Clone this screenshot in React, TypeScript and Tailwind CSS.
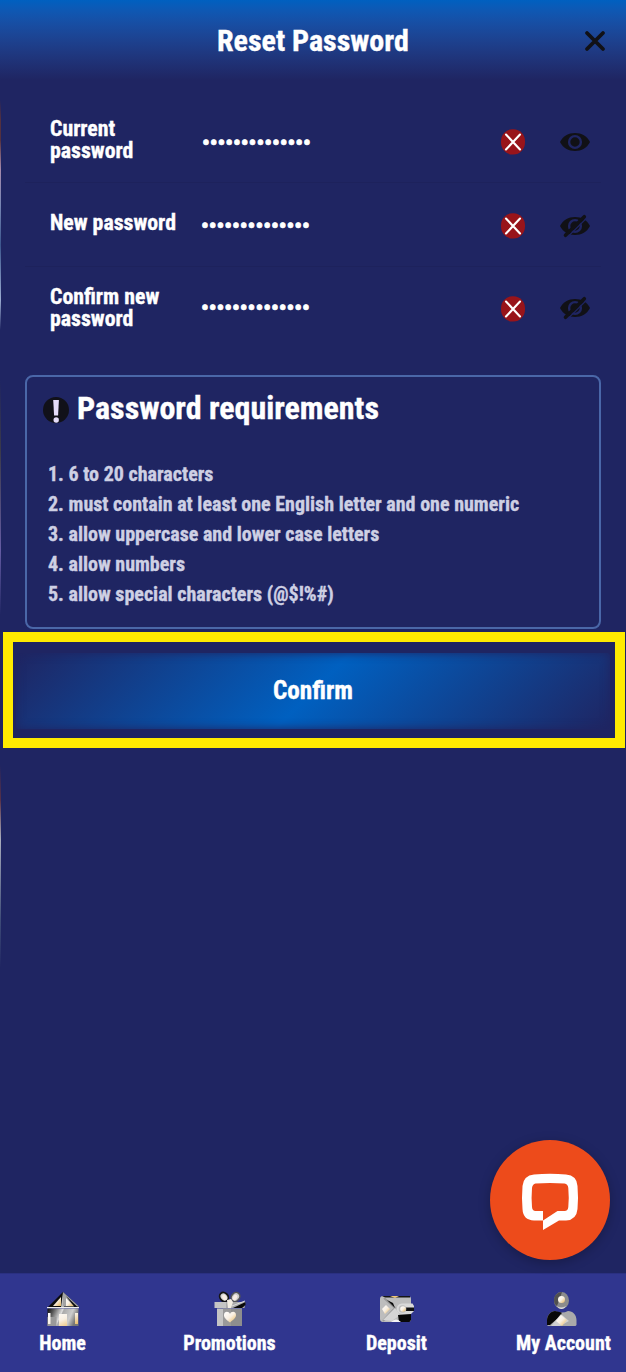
import React from "react";

function ErrorIcon() {
  return (
    <svg width="26" height="28" viewBox="0 0 26 28" className="block shrink-0">
      <rect x="1" y="1.2" width="24" height="25.4" rx="11.5" ry="12" fill="#98141a" />
      <path d="M6 6.5 20 21.5M20 6.5 6 21.5" stroke="#fff" strokeWidth="2.1" strokeLinecap="round" />
    </svg>
  );
}

function Eye({ off = false }: { off?: boolean }) {
  return (
    <svg width="30" height="24" viewBox="0 0 30 24" className="block shrink-0">
      <path d="M0 12C3 6 8.500 3 15 3s12 3 15 9c-3 6-8.500 9-15 9S3 18 0 12Z" fill="#111116" />
      <circle cx="15" cy="12" r="5.900" fill="none" stroke="#1f2562" strokeWidth="2.400" />
      {off && (
        <>
          <path d="M7.500 23 26.500 4.200" stroke="#1f2562" strokeWidth="1.200" />
          <path d="M5.500 21.300 24.300 2.700" stroke="#111116" strokeWidth="3.600" strokeLinecap="round" />
        </>
      )}
    </svg>
  );
}

function Row({ label, labelClass, dotsClass, iconsClass, off }: { label: React.ReactNode; labelClass: string; dotsClass: string; iconsClass: string; off?: boolean }) {
  return (
    <div className="mx-[25px] flex h-[84px] items-center border-b border-[#1d225c] pl-[25px] pr-[11px]">
      <div className={"w-[151px] shrink-0 text-[21.8px] leading-[22px] " + labelClass}>{label}</div>
      <div className={"flex-1 text-[21.6px] leading-[22px] [-webkit-text-stroke:0.7px_white] " + dotsClass}>••••••••••••••</div>
      <div className={"flex items-center gap-[34px] " + iconsClass}>
        <ErrorIcon />
        <Eye off={off} />
      </div>
    </div>
  );
}

function Metal({ id }: { id: string }) {
  return (
    <defs>
      <linearGradient id={id} x1="0" y1="0" x2="1" y2="0.25">
        <stop offset="0" stopColor="#080808" />
        <stop offset=".2" stopColor="#555" />
        <stop offset=".48" stopColor="#ddd" />
        <stop offset=".52" stopColor="#aaa" />
        <stop offset=".8" stopColor="#ccc" />
        <stop offset="1" stopColor="#777" />
      </linearGradient>
      <linearGradient id={id + "g"} x1="0" y1="0" x2="1" y2="1">
        <stop offset="0" stopColor="#fff" />
        <stop offset=".5" stopColor="#f8efe2" />
        <stop offset="1" stopColor="#e5b354" />
      </linearGradient>
    </defs>
  );
}

function HomeIcon() {
  return (
    <svg width="34" height="36" viewBox="0 0 34 36" className="block">
      <Metal id="home" />
      <path d="M17 1 33 16H2Z" fill="#0c0c0c" />
      <path d="M17 1 15 16h3Z" fill="#bbb" />
      <path d="M17 1v14.500h11L20 5l11 10.500h2Z" fill="#a3a3a3" />
      <path d="M15 6v9H7Z" fill="url(#homeg)" />
      <path d="M20 7v8h7.500Z" fill="url(#homeg)" />
      <path d="M1.500 17.500h31V35h-31Z" fill="url(#home)" />
      <path d="M1.500 26h9v9h-9Z" fill="#999" />
      <path d="M1 16.600h32" stroke="#eee" strokeWidth="1.200" />
      <path d="M13 23h8v12h-8ZM2 22h2.500v11H2ZM29 22h3v11h-3Z" fill="url(#homeg)" />
    </svg>
  );
}

function GiftIcon() {
  return (
    <svg width="34" height="36" viewBox="0 0 34 36" className="block">
      <Metal id="gift" />
      <ellipse cx="11" cy="6" rx="4.800" ry="4" fill="#d5d5d5" stroke="#151515" strokeWidth="1.800" transform="rotate(50 11 6)" />
      <ellipse cx="22.500" cy="6" rx="4.800" ry="4" fill="#ccc" stroke="#555" strokeWidth="1.500" transform="rotate(-50 22.500 6)" />
      <ellipse cx="11.500" cy="6.500" rx="2" ry="3" fill="#f8ede4" transform="rotate(-30 11.500 6.500)" />
      <ellipse cx="22" cy="6.500" rx="2" ry="3" fill="#f8ede4" transform="rotate(30 22 6.500)" />
      <path d="M1.500 11H13v6H1.500Z" fill="#c5c5c5" />
      <path d="M13 11h19.500l-1 6H13Z" fill="#aaa" />
      <path d="M20 17 32.500 11v3L29 17Z" fill="#080808" />
      <path d="M4 17.500h25V35H4Z" fill="#c4c4c4" />
      <path d="M10 17.500h8V35h-8Z" fill="#999" />
      <path d="M18 18h11v17H18Z" fill="#777" opacity=".7" />
      <path d="m14 9 4-1 2 3-2 6h-3Z" fill="#f4eee3" />
      <path d="m19 15 13-5" stroke="#ddd" strokeWidth="1" />
      <path d="M17 31.500c-6-4.500-6-6-6-7.500 0-4 5-4 6-1 1-3 6-3 6 1 0 2-1 3.500-6 7.500Z" fill="url(#giftg)" />
    </svg>
  );
}

function WalletIcon() {
  return (
    <svg width="36" height="36" viewBox="0 0 36 36" className="block">
      <Metal id="wallet" />
      <rect x="1" y="5" width="31" height="26" rx="3" fill="#bdbdbd" />
      <path d="M3 5h28v1.500H6Z" fill="#161616" />
      <path d="M11 5h9l-4 2Z" fill="#efc77a" />
      <path d="M5 7 16 17 4 30" fill="none" stroke="#999" strokeWidth="2" />
      <path d="m8 9 6 3 2 5Z" fill="#0a0a0a" />
      <path d="M4 29 16 17l5 7-8 6Z" fill="#d5d5d5" />
      <path d="m19 24 13-1v6l-1.500 2H20Z" fill="#080808" />
      <path d="m3 18 4-4 4 4-5 5Z" fill="url(#walletg)" />
      <path d="M33.500 12.500H23c-7 0-7 10.500 0 10.500h9l3-3v-5Z" fill="#d9d9d9" />
      <path d="M26 16.500h9v3.500h-9Z" fill="#111" />
      <circle cx="23.500" cy="18" r="3.800" fill="#bbb" />
      <circle cx="24" cy="18" r="2.800" fill="url(#walletg)" />
      <path d="M12 31q5-5 10 0Z" fill="#f4f4f4" />
    </svg>
  );
}

function AccountIcon() {
  return (
    <svg width="34" height="36" viewBox="0 0 34 36" className="block">
      <Metal id="account" />
      <ellipse cx="16.500" cy="9.500" rx="7.500" ry="8.500" fill="#8c8c8c" />
      <path d="M9 9c0-5 4-8 8-8l-2 6-3 8c-2-1-3-3-3-6Z" fill="#505050" />
      <path d="M12 15q4 3 9 0c-2 4-7 4-9 0Z" fill="#e0e0e0" />
      <circle cx="16.500" cy="8.500" r="3.500" fill="url(#accountg)" />
      <path d="M2 34v-5c0-5 4-9 8-9q7 3 13 0c5 0 8.500 4 8.500 9v5l-1 1H3Z" fill="#aaa" />
      <path d="M2 34v-5c0-5 4-9 8-9l6.500 1.500V24L5 34Z" fill="#080808" />
      <path d="m16 23 8 7-9 5H6Z" fill="#d0d0d0" />
      <path d="m11 30 5-6 6 5-5 6Z" fill="url(#accountg)" />
    </svg>
  );
}

function NavItem({ icon, label, className }: { icon: React.ReactNode; label: string; className: string }) {
  return (
    <div className={"flex shrink-0 flex-col items-center pt-[17px] " + className}>
      {icon}
      <span className="mt-[4px] whitespace-nowrap text-[20px] leading-6">{label}</span>
    </div>
  );
}

export default function App() {
  return (
    <div className="relative flex h-[1372px] w-[626px] flex-col overflow-hidden bg-[#1f2562] font-['Roboto_Condensed',Roboto,sans-serif] font-bold text-white [-webkit-text-stroke:0.35px_currentColor] [font-stretch:75%]">
      <header className="flex h-20 shrink-0 items-center justify-between bg-linear-to-b from-[#0060c0] to-[#1f2562] pl-[217px] pr-[20px]">
        <h1 className="whitespace-nowrap pt-[2px] text-[30px] leading-9">Reset Password</h1>
        <svg width="22" height="22" viewBox="0 0 22 22" className="mt-[2px]">
          <path d="m3 3 16 16M19 3 3 19" stroke="#111116" strokeWidth="3.800" strokeLinecap="round" />
        </svg>
      </header>

      <div className="flex shrink-0 flex-col pt-[19px]">
        <Row label={<>Current<br />password</>} labelClass="pb-[2px]" dotsClass="pl-px pt-[5px]" iconsClass="pt-[2px]" />
        <Row label="New password" labelClass="pb-[4px]" dotsClass="pt-[3px]" iconsClass="pt-[2px]" off />
        <div className="flex flex-col [&>div]:border-transparent">
          <Row label={<>Confirm new<br />password</>} labelClass="pb-[2px]" dotsClass="pb-[2px]" iconsClass="[&>svg:last-child]:mb-[2px]" off />
        </div>
      </div>

      <section className="mx-[25px] mt-[24px] h-[254px] shrink-0 rounded-[8px] border-2 border-[#4a67a8] pl-4">
        <h2 className="mt-[9px] flex h-[44px] items-center gap-[8px] text-[32px] leading-10">
          <svg width="26" height="26" viewBox="0 0 26 26" className="mt-[4px] shrink-0">
            <circle cx="13" cy="13" r="13" fill="#111119" />
            <path d="M10.200 3h5.700l-.8 15.500h-4Z" fill="#e5dcfa" />
            <circle cx="13.200" cy="23" r="2.700" fill="#e5dcfa" />
          </svg>
          <span>Password requirements</span>
        </h2>
        <ol className="mt-[29px] pl-[5px] text-[20.03px] leading-[30px] text-[#ced0e4]">
          <li>1. 6 to 20 characters</li>
          <li>2. must contain at least one English letter and one numeric</li>
          <li>3. allow uppercase and lower case letters</li>
          <li>4. allow numbers</li>
          <li>5. allow special characters (@$!%#)</li>
        </ol>
      </section>

      <div className="ml-[3px] mt-[3px] flex h-[116px] w-[622px] shrink-0 flex-col border-[10px] border-[#ffeb00] pt-[11px]">
        <button className="ml-[3px] mr-[5px] h-[76px] rounded bg-[linear-gradient(135deg,#1f2562_0%,#0060c0_50%,#1f2562_100%)] text-[25.2px] leading-8 shadow-[inset_0_0_10px_#1f2562]">Confirm</button>
      </div>

      <nav className="mt-auto flex h-[99px] shrink-0 border-t border-[#2a3081] bg-[#30368f]">
        <NavItem className="w-[125px]" icon={<HomeIcon />} label="Home" />
        <NavItem className="w-[209px]" icon={<GiftIcon />} label="Promotions" />
        <NavItem className="w-[125px]" icon={<WalletIcon />} label="Deposit" />
        <NavItem className="w-[209px]" icon={<div className="mr-[4px]"><AccountIcon /></div>} label="My Account" />
      </nav>

      <button className="absolute left-[490px] top-[1140px] size-[120px] rounded-full bg-[#ed4b1b] shadow-[0_3px_12px_rgba(0,0,0,0.25)]" aria-label="Chat">
        <svg width="120" height="120" viewBox="0 0 120 120" className="block">
          <path fillRule="evenodd" fill="#fff" d="M44 34.500Q60 33.200 76 34.500Q87 35.500 87.500 46Q88.500 57.500 87.500 69Q86.500 80 76 80.500H69L53 90V80.500H44Q33 80 32.500 69Q31.500 57.500 32.500 46Q33.500 35.500 44 34.500ZM45.500 43.500Q42.500 44 42 48Q41.200 57.500 42 67Q42.300 71 45.500 71H53V80.500L67.500 71H74.500Q78 71 78.300 67Q79.200 57.500 78.300 48Q78 44 74.500 43.500Q60 42.500 45.500 43.500Z" />
        </svg>
      </button>

      <div className="absolute left-0 top-[80px] h-[888px] w-px bg-[linear-gradient(to_bottom,#1f2562_0,#1f2562_20px,#54303f_40px,#54303f_60px,#a58aab_90px,#7886b4_125px,#3c568d_165px,#9aabd0_220px,#1f2562_250px,#1f2562_300px,#3a3949_370px,#655ca3_470px,#1f2562_535px,#1f2562_685px,#573047_720px,#a9adbd_760px,#3e4c78_840px,#1f2562_888px)]" />
    </div>
  );
}
